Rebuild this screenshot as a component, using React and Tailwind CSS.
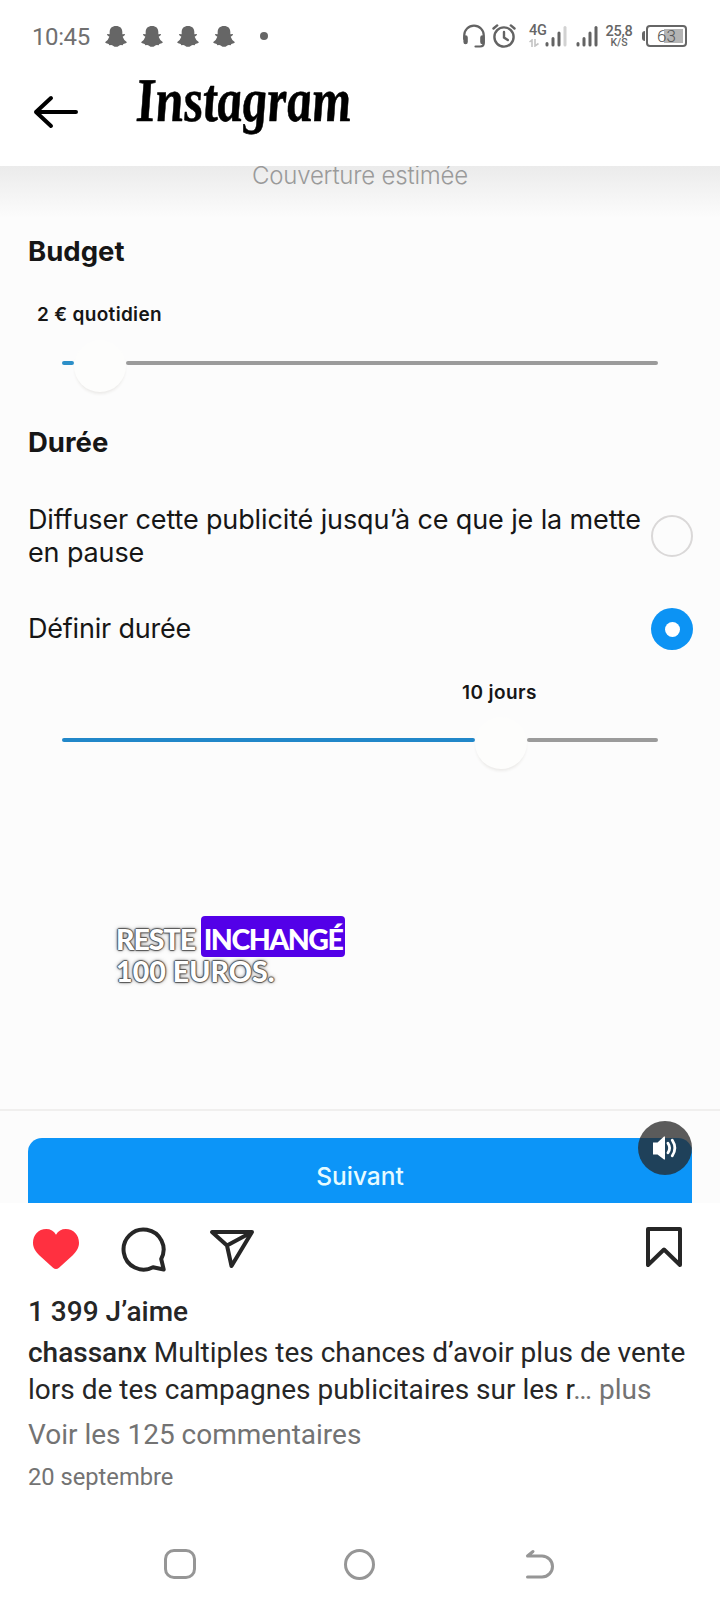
// App.jsx
import clsx from 'clsx';

const SUBTITLE_OUTLINE =
  '[text-shadow:1px_0_1px_#555,-1px_0_1px_#555,0_1px_1px_#555,0_-1px_1px_#555,0_0_4px_#777]';

function Ghost() {
  return (
    <svg className="h-[21px] w-[22px]" viewBox="0 0 66 63" fill="#666">
      <path d="M33 0C45 0 52 7 52 18V25L60 24Q61 28 53 32Q56 42 66 49Q64 53 55 54L53 58Q46 56 42 59Q33 66 24 59Q20 56 13 58L11 54Q2 53 0 49Q10 42 13 32Q5 28 6 24L14 25V18C14 7 21 0 33 0Z" />
    </svg>
  );
}

function Signal({ weak }) {
  return (
    <svg className="h-[22px] w-[22px]" viewBox="0 0 22 22" strokeWidth="3" strokeLinecap="round" stroke="#636363">
      <path d="M2 18.5V20M8 13.5V20M14 8V20" />
      <path d="M20 2.5V20" stroke={weak ? '#d2d2d2' : '#636363'} />
    </svg>
  );
}

function StatusBar() {
  return (
    <div className="flex h-[72px] items-center pl-8 text-[#666]">
      <span className="w-[61px] pt-px text-[24px] leading-none tracking-[-0.4px] text-[#707070]">10:45</span>
      <div className="ml-3 flex gap-[14px]">
        <Ghost />
        <Ghost />
        <Ghost />
        <Ghost />
      </div>
      <span className="ml-[25px] size-2 rounded-full bg-[#666]" />

      {/* Right side */}
      <svg className="ml-[194px] size-6" viewBox="0 0 24 24" fill="none" stroke="#636363" strokeWidth="2.2" strokeLinecap="round">
        <path d="M2.2 15V11.5A9.8 9.8 0 0 1 21.8 11.5V19Q21.8 22.5 18 22.5H13.5" />
        <path d="M3.6 13.5V18M20.4 13.5V18" strokeWidth="4.4" />
      </svg>
      <svg className="ml-[6px] size-6" viewBox="0 0 24 24" fill="none" stroke="#636363" strokeWidth="2.4" strokeLinecap="round">
        <circle cx="12" cy="13" r="9.6" />
        <path d="M1.5 4.5L5.2 1.4M22.5 4.5L18.8 1.4M12 8V13.5L15.8 16" />
      </svg>
      <div className="ml-[13px] flex h-[22px] w-4 flex-col justify-between">
        <span className="text-[14.5px] leading-[12px] font-medium tracking-[-0.3px]">4G</span>
        <svg className="h-2 w-[10px]" viewBox="0 0 10 8" fill="none" stroke="#c4c4c4" strokeWidth="1.6">
          <path d="M.5 3L3 1V8M6 0V7L9.5 4.5" />
        </svg>
      </div>
      <Signal weak />
      <div className="ml-[9px]">
        <Signal />
      </div>
      <div className="ml-[6px] flex w-[30px] flex-col items-center pt-px font-medium">
        <span className="text-[14.5px] leading-[13px] tracking-[-0.3px]">25,8</span>
        <span className="text-[10.5px] leading-[10px]">K/S</span>
      </div>
      <div className="ml-[8px] flex items-center">
        <span className="h-[10px] w-[3px] rounded-l-sm bg-[#666]" />
        <div className="ml-px flex h-[22px] w-[41px] items-center justify-center rounded-[4px] border-2 border-[#666] bg-linear-to-r from-white from-[42%] to-[#b4b4b4] to-[42%] bg-clip-content p-[2px] text-[17px] leading-none font-light text-[#555]">
          63
        </div>
      </div>
    </div>
  );
}

function Header() {
  return (
    <header className="flex h-[94px] items-start pl-8">
      <svg className="mt-[22px] h-9 w-12" viewBox="0 0 48 36" fill="none" stroke="#000" strokeWidth="4" strokeLinecap="round" strokeLinejoin="round">
        <path d="M44 18H4M19 4L4 18L19 32" />
      </svg>
      <svg className="mt-[2px] ml-[54px] h-[70px] w-[232px] overflow-visible" viewBox="0 0 232 70">
        <text
          x="0"
          y="47"
          transform="skewX(4)"
          textLength="215"
          lengthAdjust="spacingAndGlyphs"
          stroke="#000"
          strokeWidth="0.6"
          strokeLinejoin="round"
          className="font-['Liberation_Serif',serif] text-[62px] font-bold italic"
        >
          Instagram
        </text>
      </svg>
    </header>
  );
}

function Slider({ before, after }) {
  return (
    <div className="flex h-[60px] w-[596px] items-center">
      <span className={clsx('h-1 rounded-full', before)} />
      <span className="mt-[6px] size-[52px] shrink-0 rounded-full bg-[#fdfdfc] shadow-[0_3px_3px_-1px_#ebeae8]" />
      <span className={clsx('h-1 rounded-full bg-[#9b9b9b]', after)} />
    </div>
  );
}

function Radio({ checked }) {
  return (
    <span
      className={clsx(
        'flex size-[42px] shrink-0 items-center justify-center rounded-full',
        checked ? 'bg-[#0c93f4]' : 'border-2 border-[#dad8d8]'
      )}
    >
      {checked && <span className="size-[15px] rounded-full bg-white" />}
    </span>
  );
}

function Video() {
  return (
    <section className="relative h-[1037px] overflow-hidden bg-[#fcfcfc] font-['Inter',sans-serif] text-[#161616]">
      <div className="flex h-[52px] justify-center bg-linear-to-b from-[#ebebeb] to-[#fcfcfc] text-[24px] leading-[20px] font-light tracking-[-0.2px] text-[#9a9a9a]">
        Couverture estimée
      </div>

      {/* Budget */}
      <h2 className="mt-[17px] pl-7 text-[27.5px] leading-8 font-bold">Budget</h2>
      <p className="mt-[36px] pl-[37px] text-[19px] leading-6 font-semibold tracking-[0.32px]">2 € quotidien</p>
      <div className="mt-[6px] pl-[62px]">
        <Slider before="w-3 bg-[#2c8fc8]" after="w-[532px]" />
      </div>

      {/* Durée */}
      <h2 className="mt-[33px] pl-7 text-[27.5px] leading-8 font-bold">Durée</h2>
      <div className="mt-[45px] flex h-[65px] items-center justify-between pr-[27px] pl-7">
        <p className="text-[27px] leading-[33px] tracking-[-0.13px] whitespace-nowrap">
          Diffuser cette publicité jusqu’à ce que je la mette
          <br />
          en pause
        </p>
        <Radio />
      </div>
      <div className="mt-[40px] flex h-[42px] items-center justify-between pr-[27px] pl-7">
        <p className="text-[27px] leading-8 tracking-[-0.2px]">Définir durée</p>
        <Radio checked />
      </div>
      <p className="mt-[31px] pl-[462px] text-[19px] leading-6 font-semibold tracking-[0.42px]">10 jours</p>
      <div className="mt-[5px] pl-[62px]">
        <Slider before="w-[413px] bg-[#2187c9]" after="w-[131px]" />
      </div>

      {/* Subtitles */}
      <div className="mt-[146px] pl-[116px] font-['Lato',sans-serif] text-[28.5px] font-black text-white">
        <div className="flex h-[41px] items-center">
          <span className={clsx('w-[85px] pt-[6px] leading-none tracking-[-1px]', SUBTITLE_OUTLINE)}>RESTE</span>
          <span className="flex h-[41px] w-[144px] items-center justify-center rounded-[4px] bg-[#5300e8] pt-[6px] leading-none tracking-[-1.5px]">
            INCHANGÉ
          </span>
        </div>
        <div className={clsx('leading-[28px] tracking-[0.1px]', SUBTITLE_OUTLINE)}>100 EUROS.</div>
      </div>

      <div className="mt-[124px] border-t-2 border-[#f0efee] px-7 pt-[27px]">
        <div className="flex h-[100px] justify-center rounded-t-[14px] bg-[#0c95f8] pt-[25px] text-[24.5px] leading-[26px] font-medium text-[#e6fbff]">
          Suivant
        </div>
      </div>

      {/* Sound toggle */}
      <div className="absolute right-7 bottom-7 flex size-[54px] items-center justify-center rounded-full bg-[#262626]/75">
        <svg className="size-6" viewBox="0 0 24 24" fill="#fff">
          <path d="M0 6.5H4.5L11 .5H12V23.5H11L4.5 18.5H0Z" />
          <path d="M15 7.2Q18.2 12 15 16.8M19.3 4.2Q24.4 12 19.3 19.8" fill="none" stroke="#fff" strokeWidth="2.8" strokeLinecap="round" />
        </svg>
      </div>
    </section>
  );
}

function Actions() {
  return (
    <div className="flex h-[92px] items-center pr-[36px] pl-8 text-[#262626]">
      <svg className="h-[42px] w-12" viewBox="0 0 48 42" fill="#ff3040">
        <path d="M14.2 1C18.5 1 22 3 24 6.8C26 3 29.5 1 33.8 1C41.5 1 47 7 47 14.8C47 20 44.5 23.5 40.5 27.5L27 39.7Q24 42.2 21 39.7L7.5 27.5C3.5 23.5 1 20 1 14.8C1 7 6.5 1 14.2 1Z" />
      </svg>
      <svg className="ml-[40px] size-[46px]" viewBox="0 0 46 46" fill="none" stroke="currentColor" strokeWidth="4" strokeLinejoin="round">
        <path d="M41.2 33A20 20 0 1 0 33 41.2L43.7 43.5Z" />
      </svg>
      <svg className="ml-[43px] h-[42px] w-[46px]" viewBox="0 0 46 42" fill="none" stroke="currentColor" strokeWidth="4" strokeLinejoin="round">
        <path d="M3 4H43L22.5 38L18 17.5ZM18 17.5L43 4" />
      </svg>
      <svg className="mt-[-4px] ml-auto h-[42px] w-[40px]" viewBox="0 0 40 42" fill="none" stroke="currentColor" strokeWidth="4" strokeLinejoin="round">
        <path d="M4 3H36V39L20 23.5L4 39Z" />
      </svg>
    </div>
  );
}

function Caption() {
  return (
    <div className="h-[224px] px-7 pt-px text-[28px] text-[#262626]">
      <p className="leading-8 font-medium">1 399 J’aime</p>
      <p className="mt-[6px] leading-[37px] whitespace-nowrap">
        <span className="font-medium">chassanx</span> Multiples tes chances d’avoir plus de vente
        <br />
        lors de tes campagnes publicitaires sur les r<span className="text-[#737373]">… plus</span>
      </p>
      <p className="mt-[11px] leading-8 text-[#737373]">Voir les 125 commentaires</p>
      <p className="mt-[11px] text-[23.7px] leading-[30px] text-[#737373]">20 septembre</p>
    </div>
  );
}

function NavBar() {
  return (
    <nav className="flex h-[90px] items-center justify-between pr-[165px] pl-[164px]">
      <span className="h-[30px] w-8 rounded-[10px] border-3 border-[#969696]" />
      <span className="size-[31px] rounded-full border-3 border-[#969696]" />
      <svg className="h-8 w-8" viewBox="0 0 32 32" fill="none" stroke="#969696" strokeWidth="3" strokeLinecap="round" strokeLinejoin="round">
        <path d="M10 3.5L4.5 8H19A10.5 10.5 0 0 1 19 29H4.5" />
      </svg>
    </nav>
  );
}

export default function App() {
  return (
    <div className="h-[1612px] w-[720px] overflow-hidden bg-white font-['Roboto',sans-serif]">
      <StatusBar />
      <Header />
      <Video />
      <Actions />
      <Caption />
      <NavBar />
    </div>
  );
}
